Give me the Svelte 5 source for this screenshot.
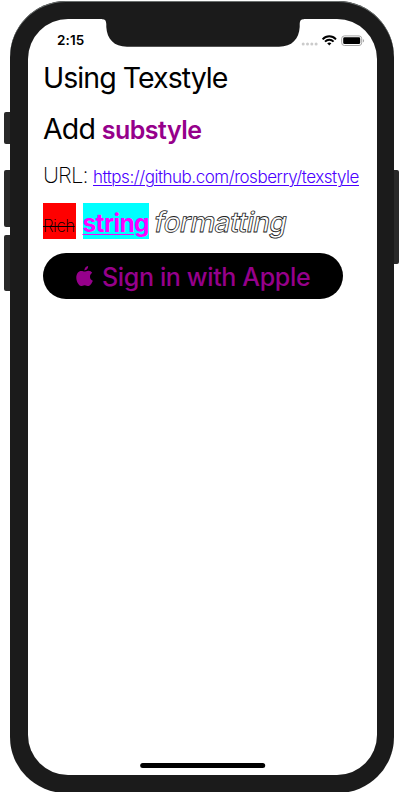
<script>
  const link = 'https://github.com/rosberry/texstyle';
</script>

<div class="stage">
  <i class="key mute"></i>
  <i class="key up"></i>
  <i class="key down"></i>
  <i class="key power"></i>
  <div class="phone">
    <div class="screen">
      <svg class="notch" width="202" height="29" viewBox="0 0 202 29">
        <path d="M0 0H202V.2C199 .3 198 1 197.700 5V8C197 20 190 27.700 177 27.700H25C12 27.700 5 20 4.300 8V5C4 1 3 .3 0 .2Z" fill="#1b1b1b" />
      </svg>
      <header>
        <time>2:15</time>
        <svg class="status" width="64" height="12" viewBox="0 0 64 12">
          <g fill="#cbcbcb">
            <circle cx="2.200" cy="9" r="1.500" /><circle cx="6.500" cy="9" r="1.500" />
            <circle cx="10.800" cy="9" r="1.500" /><circle cx="15.100" cy="9" r="1.500" />
          </g>
          <g fill="none" stroke="#000" stroke-width="1.900">
            <path d="M21.600 4.300C25.400 .3 31.200 .3 35 4.300M24 6.700C26.500 4.100 30.100 4.100 32.600 6.700" />
          </g>
          <path d="M26.200 8.300C27.500 7.200 29.100 7.200 30.400 8.300L28.300 10.400Z" />
          <rect x="40.700" y=".9" width="20" height="9.600" rx="2.700" fill="none" stroke="#a5a5a5" />
          <rect x="42.200" y="2.300" width="17" height="6.800" rx="1.400" />
          <path d="M61.900 4C63.500 4.400 63.500 7 61.900 7.400Z" fill="#a5a5a5" />
        </svg>
      </header>
      <main>
        <p class="title"><span>Using Texstyle</span></p>
        <p class="add"><span>Add</span><b>substyle</b></p>
        <p class="url"><span>URL:</span><a href={link}>{link}</a></p>
        <p class="rich"><s>Rich</s><strong>string</strong><em>formatting</em></p>
        <button>
          <svg width="17" height="21" viewBox="0 0 17 21">
            <path d="M8.500 5.600C9.500 5.600 10.800 4.600 12.500 4.700C14 4.700 15.400 5.500 16.200 6.700C12.900 8.800 13.400 13.300 16.800 14.700C16 17 14.100 20 12.300 20C11 20 10.300 19.200 8.700 19.200C7 19.200 6.300 20 5.100 20C2.800 20 .3 15.500 .3 11.800C.3 7.500 2.700 4.900 5.200 4.900C6.600 4.900 7.700 5.600 8.500 5.600ZM8.400 4.600C8.200 2.500 10 .5 12.100 .1C12.400 2.400 10.500 4.500 8.400 4.600Z" fill="#96008b" />
          </svg>
          <span>Sign in with Apple</span>
        </button>
      </main>
      <i class="home"></i>
    </div>
  </div>
</div>

<style>
  :global(body) { background: #fff; overflow: hidden; }
  .stage {
    position: relative;
    box-sizing: border-box;
    width: 404px;
    height: 792px;
    padding: 1px 10px 0;
    background: #fff;
    font-family: Inter, "Liberation Sans", sans-serif;
    color: #000;
  }
  .phone {
    position: relative;
    box-sizing: border-box;
    height: 792px;
    padding: 18px 17px 18px 18px;
    border-radius: 56px;
    background: #1b1b1b;
    box-shadow: inset 0 1px 0 #6b706f;
  }
  .screen {
    position: relative;
    display: flex;
    flex-direction: column;
    height: 756px;
    border-radius: 40px;
    background: #fff;
  }
  .key { position: absolute; width: 9px; background: #292929; border-radius: 2px; }
  .mute { left: 4px; top: 112px; height: 32px; }
  .up { left: 4px; top: 170px; height: 57px; }
  .down { left: 4px; top: 235px; height: 56px; }
  .power { left: 390px; top: 170px; height: 94px; }
  .notch { position: absolute; left: 74px; top: 0; }
  header {
    display: flex;
    justify-content: space-between;
    height: 42px;
    padding: 14px 12px 0 29px;
    box-sizing: border-box;
  }
  time { font-size: 13.5px; font-weight: 600; line-height: 15px; letter-spacing: .1px; }
  .status { margin: 1.500px .5px 0 0; }
  main { display: flex; flex-direction: column; align-items: flex-start; padding-left: 15px; }
  p { display: flex; align-items: baseline; margin: 0; white-space: nowrap; }
  .title { height: 51px; font-size: 28.5px; line-height: 33px; letter-spacing: -.95px; }
  .add { height: 48px; font-size: 28.5px; line-height: 33px; letter-spacing: -.8px; }
  .add b { margin-left: 6.500px; color: #96008b; font-size: 25px; font-weight: 600; letter-spacing: -.5px; }
  .url { height: 42px; font-size: 22px; font-weight: 200; line-height: 30px; }
  .url span { width: 44px; letter-spacing: -.9px; }
  a { margin-left: 6px; color: #4b00ff; font-size: 17px; font-weight: 300; letter-spacing: -.47px; text-decoration-thickness: 1px; text-underline-offset: 2px; }
  .rich { height: 51px; align-items: flex-start; }
  .rich > * { box-sizing: border-box; height: 36px; margin-top: .5px; }
  s { width: 33px; background: #f00; font-size: 17px; font-weight: 200; line-height: 46px; letter-spacing: -.5px; text-decoration-thickness: 1px; }
  strong { margin-left: 6.500px; width: 66.500px; background: #0ff; color: #f0f; font-size: 24.5px; font-weight: 700; line-height: 41px; letter-spacing: -.65px; text-decoration: underline; text-decoration-thickness: 1px; text-underline-offset: 2px; }
  em { margin-left: 4px; font-size: 28px; font-style: normal; font-weight: 500; line-height: 39px; letter-spacing: -.65px; color: #fff; -webkit-text-stroke: .8px #222; transform: skewX(-11deg); transform-origin: 0 29px; }
  button {
    display: flex;
    align-items: center;
    width: 300px;
    height: 46px;
    padding: 0 0 0 33px;
    border: 0;
    border-radius: 23px;
    background: #000;
    color: #96008b;
    font: 550 25px/48px Inter, "Liberation Sans", sans-serif;
    letter-spacing: -.35px;
    white-space: nowrap;
  }
  button svg { flex: none; margin-right: 9px; }
  button span { margin-top: 1px; }
  .home { width: 125px; height: 5px; margin: auto auto 7px; border-radius: 3px; background: #000; transform: translateX(.2px); }
</style>
